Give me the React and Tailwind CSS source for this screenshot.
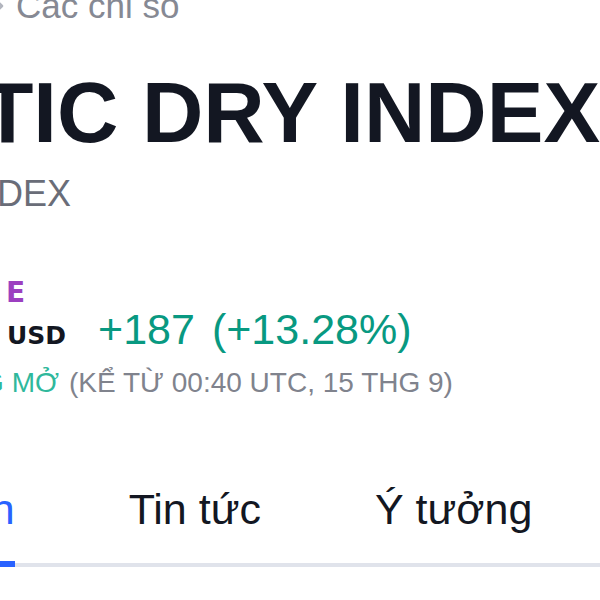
export default function App() {
  return (
    <div className="w-[600px] h-[600px] overflow-hidden bg-white flex flex-col font-['Liberation_Sans',Arial,sans-serif]">
      {/* breadcrumb */}
      <div className="-mt-[12px] flex items-center h-[35px] text-[35px] leading-[35px] text-[#868993] whitespace-nowrap">
        <svg width="12" height="20" viewBox="0 0 12 20" className="-ml-[8px] shrink-0" fill="none">
          <path d="M2 2 L10 10 L2 18" stroke="#b2b5be" strokeWidth="2.5" strokeLinecap="round" strokeLinejoin="round" />
        </svg>
        <span className="ml-[12px]">Các chỉ số</span>
      </div>

      {/* title */}
      <h1 className="mt-[48px] -ml-[187px] text-[85px] leading-[84px] font-bold text-[#131722] whitespace-nowrap">
        BALTIC DRY INDEX
      </h1>
      <div className="mt-[21px] -ml-[39px] text-[36px] leading-[36px] text-[#6a6d78] whitespace-nowrap">
        INDEX
      </div>

      {/* price block */}
      <div className="mt-[67px] ml-[6px] text-[28px] leading-[28px] font-bold text-[#9c3fc0] font-['DejaVu_Sans',sans-serif]">
        E
      </div>
      <div className="flex items-baseline whitespace-nowrap">
        <span className="ml-[7px] text-[25px] leading-[25px] font-bold text-[#131722] font-['DejaVu_Sans',sans-serif]">
          USD
        </span>
        <span className="ml-[32px] text-[43px] leading-[44px] text-[#089981]">+187</span>
        <span className="ml-[17px] text-[43px] leading-[44px] text-[#089981]">(+13.28%)</span>
      </div>
      <div className="mt-[18px] -ml-[77px] text-[28px] leading-[28px] whitespace-nowrap">
        <span className="text-[#2fb89c]">ĐANG MỞ</span>
        <span className="ml-[10px] text-[#80838d]">(KỂ TỪ 00:40 UTC, 15 THG 9)</span>
      </div>

      {/* tabs */}
      <div className="mt-[91px] flex items-start gap-[114px] border-b-4 border-[#e0e3eb] text-[43px] leading-[43px] whitespace-nowrap">
        <div className="-ml-[191px] shrink-0 pb-[30px] border-b-[6px] border-[#2962ff] -mb-[4px] text-[#2962ff]">
          Tổng quan
        </div>
        <div className="shrink-0 pb-[32px] text-[#131722]">Tin tức</div>
        <div className="shrink-0 pb-[32px] text-[#131722]">Ý tưởng</div>
        <div className="shrink-0 pb-[32px] text-[#131722]">Thảo luận</div>
      </div>
    </div>
  );
}
